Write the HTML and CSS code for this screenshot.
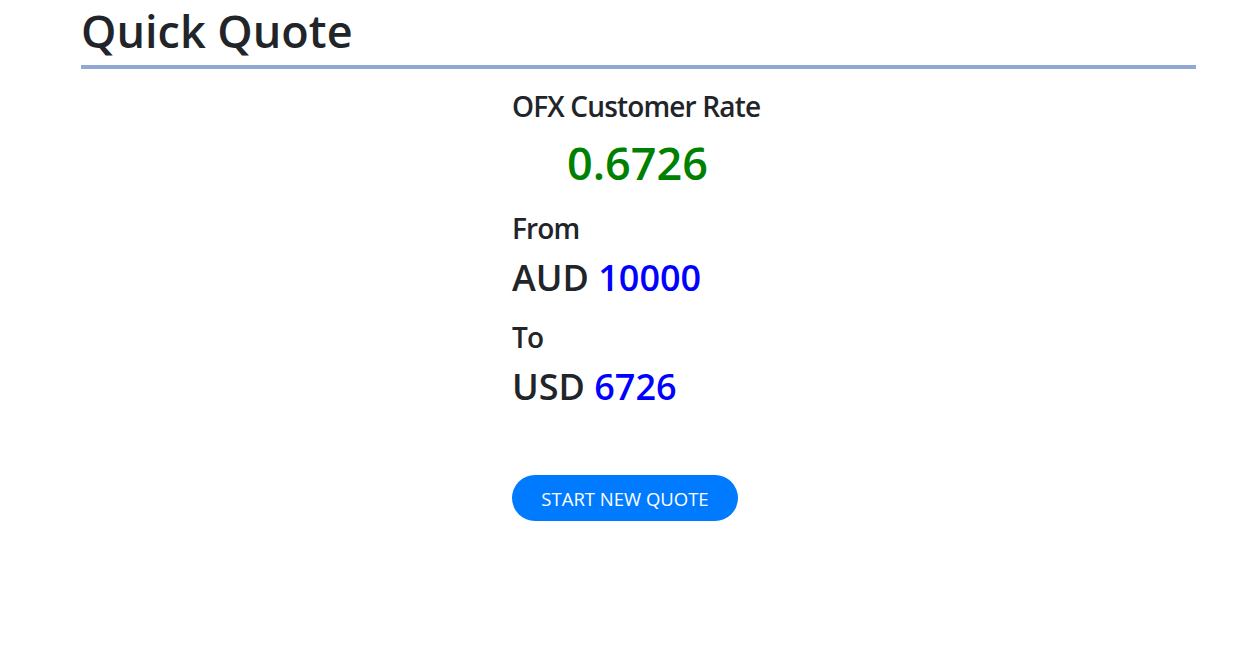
FILE: index.html
```html
<!DOCTYPE html>
<html>
<head>
<meta charset="utf-8">
<link rel="stylesheet" href="styles.css">
</head>
<body>
<div class="page">
  <h1 class="title">Quick Quote</h1>
  <div class="quote">
    <div class="label">OFX Customer Rate</div>
    <div class="rate">0.6726</div>
    <div class="label label-gap">From</div>
    <div class="amount">AUD <span class="num">10000</span></div>
    <div class="label label-gap">To</div>
    <div class="amount">USD <span class="num">6726</span></div>
    <button class="btn">START NEW QUOTE</button>
  </div>
</div>
</body>
</html>
```
FILE: styles.css
```css
html, body { margin: 0; padding: 0; background: #fff; }
body { font-family: "Open Sans", "Noto Sans", sans-serif; color: #212529; }
.page { margin-left: 81px; width: 1115px; }
.title {
  margin: 0;
  font-size: 45px;
  font-weight: 600;
  line-height: 62px;
  padding-bottom: 3px;
  border-bottom: 4px solid #8fa8d4;
}
.quote {
  margin-left: 431px;
  padding-top: 20px;
  display: flex;
  flex-direction: column;
  align-items: flex-start;
}
.label { font-size: 28px; line-height: 34px; font-weight: 600; letter-spacing: -0.03em; }
.label-gap { margin-top: 20px; }
.rate {
  margin-top: 12px;
  margin-left: 55px;
  font-size: 45px;
  line-height: 56px;
  font-weight: 600;
  color: #008000;
}
.amount { margin-top: 11px; font-size: 36px; line-height: 44px; font-weight: 600; }
.num { color: #0000ff; }
.btn {
  margin-top: 66px;
  width: 226px;
  height: 46px;
  border: none;
  border-radius: 23px;
  background: #007bff;
  color: #fff;
  font-family: inherit;
  font-size: 18.5px;
  padding: 0;
}
```
